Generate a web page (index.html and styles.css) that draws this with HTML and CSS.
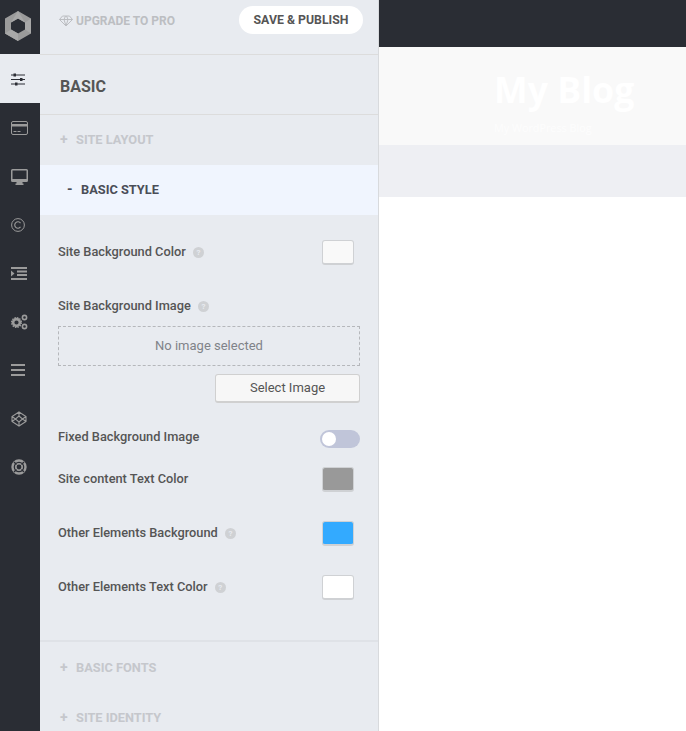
FILE: index.html
```html
<!DOCTYPE html>
<html lang="en">
<head>
<meta charset="utf-8">
<title>Customizer</title>
<link rel="stylesheet" href="styles.css">
</head>
<body>
<div class="app">
  <nav class="rail">
    <div class="rail-logo">
      <svg width="26" height="30" viewBox="0 0 26 30"><path fill="#9b9b9b" fill-rule="evenodd" d="M13 0 26 7.500V22.500L13 30 0 22.500V7.500ZM13 7.500 6 11.500V18.500L13 22.500 20 18.500V11.500Z"/><path fill="#a8a8a8" d="M13 0 20 11.500 13 7.500 6 11.500ZM0 22.500 6 18.500 13 22.500 13 30ZM26 7.500V22.500L20 18.500V11.500Z"/></svg>
    </div>
    <a class="rail-item active"><svg width="14" height="13" viewBox="0 0 14 13"><path fill="none" stroke="#2a2d34" d="M0 2H14M0 6.500H14M0 11H14"/><path fill="#2a2d34" d="M2.500 .5h2.500v3H2.500zM9 5h2.500v3H9zM4 9.500h2.500v3H4z"/></svg></a>
    <a class="rail-item"><svg width="17" height="14" viewBox="0 0 17 14"><rect x=".5" y=".5" width="16" height="13" rx="1.500" fill="none" stroke="#9b9b9b"/><path fill="#9b9b9b" d="M1 3h15v2.500H1zM2.500 10h3v1h-3zM6.500 10h3v1h-3z"/></svg></a>
    <a class="rail-item"><svg width="17" height="16" viewBox="0 0 17 16"><path fill="#9b9b9b" fill-rule="evenodd" d="M1.500 0h14A1.500 1.500 0 0 1 17 1.500v10a1.500 1.500 0 0 1-1.500 1.500H11.500v1.500h1V16h-8v-1.500h1V13h-4A1.500 1.500 0 0 1 0 11.500v-10A1.500 1.500 0 0 1 1.500 0ZM1.500 1.500v8.500h14V1.500Z"/></svg></a>
    <a class="rail-item"><svg width="14" height="14" viewBox="0 0 14 14" fill="none" stroke="#9b9b9b"><circle cx="7" cy="7" r="6.400"/><path stroke-width="1.100" d="M9.500 5.100a3.200 3.200 0 1 0 0 3.800"/></svg></a>
    <a class="rail-item"><svg width="16" height="13" viewBox="0 0 16 13"><path fill="#9b9b9b" d="M0 0h16v2H0zM6 3.500h10v2H6zM6 7h10v2H6zM0 11h16v2H0zM0 3.500 3.500 6.500 0 9.500Z"/></svg></a>
    <a class="rail-item"><svg width="17" height="16" viewBox="0 0 17 16"><circle cx="5.500" cy="8.500" r="3.400" fill="none" stroke="#9b9b9b" stroke-width="2.600"/><circle cx="5.500" cy="8.500" r="5" fill="none" stroke="#9b9b9b" stroke-width="1.100" stroke-dasharray="1.500 1.100"/><circle cx="13.500" cy="3.500" r="2.100" fill="none" stroke="#9b9b9b" stroke-width="1.600"/><circle cx="13.500" cy="12.500" r="2.100" fill="none" stroke="#9b9b9b" stroke-width="1.600"/></svg></a>
    <a class="rail-item"><svg width="14" height="12" viewBox="0 0 14 12"><path fill="#9b9b9b" d="M0 0h14v2H0zM0 5h14v2H0zM0 10h14v2H0z"/></svg></a>
    <a class="rail-item"><svg width="16" height="16" viewBox="0 0 16 16" fill="none" stroke="#9b9b9b" stroke-width="1.100"><path d="M8 1 15 5.500V10.500L8 15 1 10.500V5.500ZM8 1V5L4.500 8 8 11V15M8 5 11.500 8 8 11M1 5.500 4.500 8 1 10.500M15 5.500 11.500 8 15 10.500"/></svg></a>
    <a class="rail-item"><svg width="16" height="16" viewBox="0 0 16 16" fill="none" stroke="#9b9b9b"><circle cx="8" cy="8" r="6.500" stroke-width="2.400"/><circle cx="8" cy="8" r="3.200" stroke-width="1.600"/><path stroke-width="1.400" stroke="#2a2d34" d="M3 3 5.500 5.500M13 3 10.500 5.500M3 13 5.500 10.500M13 13 10.500 10.500"/></svg></a>
  </nav>

  <aside class="panel">
    <header class="panel-top">
      <a class="upgrade"><svg width="14" height="12" viewBox="0 0 14 12" fill="none" stroke="#bcbec2"><path d="M3.500 1h7L13.500 4.500 7 11 .5 4.500ZM.5 4.500h13M5 4.500 7 11 9 4.500 7.500 1M5 4.500 6.500 1"/></svg>UPGRADE TO PRO</a>
      <button class="publish">SAVE &amp; PUBLISH</button>
    </header>
    <h2 class="panel-title">BASIC</h2>
    <div class="section"><span class="sign">+</span>SITE LAYOUT</div>
    <div class="section open"><span class="sign">-</span>BASIC STYLE</div>
    <div class="controls">
      <div class="row row-color">
        <span class="label">Site Background Color <i class="help">?</i></span>
        <span class="swatch swatch-light"></span>
      </div>
      <div class="image-field">
        <span class="label">Site Background Image <i class="help">?</i></span>
        <div class="dropzone">No image selected</div>
        <div class="image-actions"><button class="select">Select Image</button></div>
      </div>
      <div class="row row-toggle">
        <span class="label">Fixed Background Image</span>
        <span class="toggle"><span class="knob"></span></span>
      </div>
      <div class="row row-color">
        <span class="label">Site content Text Color</span>
        <span class="swatch swatch-gray"></span>
      </div>
      <div class="row row-color">
        <span class="label">Other Elements Background <i class="help">?</i></span>
        <span class="swatch swatch-blue"></span>
      </div>
      <div class="row row-color">
        <span class="label">Other Elements Text Color <i class="help">?</i></span>
        <span class="swatch swatch-white"></span>
      </div>
    </div>
    <div class="section"><span class="sign">+</span>BASIC FONTS</div>
    <div class="section"><span class="sign">+</span>SITE IDENTITY</div>
  </aside>

  <main class="preview">
    <div class="preview-bar"></div>
    <div class="hero">
      <h1 class="blog-title">My Blog</h1>
      <p class="blog-tag">My WordPress Blog</p>
    </div>
    <div class="preview-nav"></div>
  </main>
</div>
</body>
</html>
```
FILE: styles.css
```css
* { box-sizing: border-box; }
html, body { margin: 0; height: 100%; }
body { overflow: hidden; background: #fff; font-family: Roboto, "Liberation Sans", sans-serif; }
.app { display: flex; height: 731px; overflow: hidden; }

.rail { flex: 0 0 40px; background: #2a2d34; display: flex; flex-direction: column; }
.rail-logo { height: 54px; padding: 11px 0 0 5px; }
.rail-logo svg { display: block; }
.rail-item { height: 48.400px; padding: 2px 0 0 11px; display: flex; align-items: center; flex: none; }
.rail-item.active { height: 49px; background: #e8ebf0; }

.panel { flex: 0 0 339px; background: #e8ebf0; border-right: 1px solid #d8dadd; overflow: hidden; }
.panel-top { height: 55px; padding: 6px 15px 0 19px; border-bottom: 1px solid #dcdcdc; display: flex; justify-content: space-between; align-items: flex-start; }
.upgrade { display: flex; align-items: center; gap: 3px; margin-top: 8px; font-size: 12px; font-weight: 700; color: #bcbec2; line-height: 14px; }
.publish { width: 124px; height: 28px; border: 0; border-radius: 14px; background: #fff; color: #555; font: 700 12.300px Roboto, sans-serif; padding: 0; }
.panel-title { margin: 0; height: 60px; padding-left: 20px; border-bottom: 1px solid #dcdcdc; font-size: 16px; font-weight: 700; color: #555; line-height: 63px; }

.section { height: 50px; display: flex; align-items: center; padding: 0 0 2px 20px; font-size: 12.800px; font-weight: 700; color: #c5c7cc; }
.section .sign { width: 16px; font-size: 14px; }
.section.open { background: #f0f5fe; color: #4a4d57; padding-left: 27px; }
.section.open .sign { width: 14px; }

.controls { padding: 10px 18px 0; height: 427px; margin-bottom: 1px; border-bottom: 2px solid #dfe2e7; }
.row { display: flex; justify-content: space-between; align-items: center; }
.row-color { height: 54px; padding-right: 6px; }
.row-toggle { height: 30px; margin-top: 21px; }
.row-toggle .label { margin-top: -4px; }
.row-toggle + .row-color { margin-top: -2px; }
.label { font-size: 12.800px; font-weight: 500; color: #555; line-height: 16px; }
.help { display: inline-block; width: 11px; height: 11px; margin-left: 4px; border-radius: 50%; background: #cfd1d4; color: #e8ebf0; font: 700 8px/11px Roboto, sans-serif; text-align: center; vertical-align: 1px; }
.swatch { width: 32px; height: 25px; border-radius: 3px; border: 1px solid #cfd1d4; border-bottom-width: 2px; }
.swatch-light { background: #f9f9f9; }
.swatch-gray { background: #999; }
.swatch-blue { background: #33aaff; }
.swatch-white { background: #fff; }
.image-field { padding-top: 19px; }
.image-field .label { display: block; }
.dropzone { margin-top: 12px; height: 40px; padding-bottom: 2px; border: 1px dashed #b5b7bb; color: #808389; font-size: 13px; display: flex; align-items: center; justify-content: center; }
.image-actions { display: flex; justify-content: flex-end; margin-top: 8px; }
.select { width: 145px; height: 29px; padding: 0 0 2px; background: #f7f7f7; border: 1px solid #d0d0d0; border-bottom-width: 2px; border-radius: 3px; color: #555; font: 400 13px Roboto, sans-serif; }
.toggle { width: 40px; height: 18px; border-radius: 9px; background: #c0c5d9; padding: 2px; }
.knob { display: block; width: 14px; height: 14px; border-radius: 50%; background: #fff; }

.preview { flex: 1; min-width: 0; }
.preview-bar { height: 47px; background: #2a2d34; }
.hero { height: 98px; background: #f9f9f9; padding: 22px 0 0 115px; }
.blog-title { margin: 0; font: 700 35.700px/40px "Open Sans", sans-serif; color: #fff; }
.blog-tag { margin: 11px 0 0; font: 400 10.800px/16px "Open Sans", sans-serif; color: #fdfdfd; }
.preview-nav { height: 52px; background: #eeeff3; }
```
